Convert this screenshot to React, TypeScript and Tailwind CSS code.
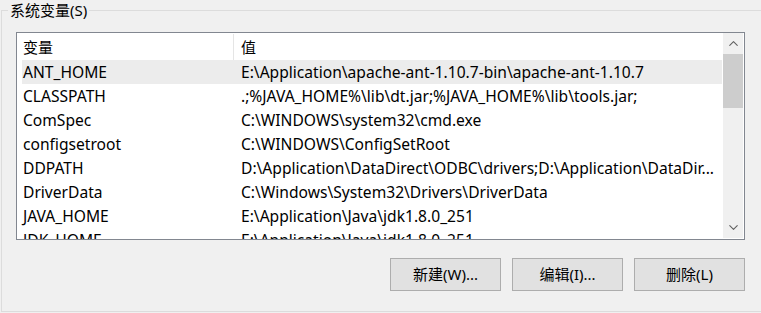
import { ChevronUp, ChevronDown } from 'lucide-react';

const rows = [
  { name: 'ANT_HOME', value: 'E:\\Application\\apache-ant-1.10.7-bin\\apache-ant-1.10.7', selected: true },
  { name: 'CLASSPATH', value: '.;%JAVA_HOME%\\lib\\dt.jar;%JAVA_HOME%\\lib\\tools.jar;' },
  { name: 'ComSpec', value: 'C:\\WINDOWS\\system32\\cmd.exe' },
  { name: 'configsetroot', value: 'C:\\WINDOWS\\ConfigSetRoot' },
  { name: 'DDPATH', value: 'D:\\Application\\DataDirect\\ODBC\\drivers;D:\\Application\\DataDir...' },
  { name: 'DriverData', value: 'C:\\Windows\\System32\\Drivers\\DriverData' },
  { name: 'JAVA_HOME', value: 'E:\\Application\\Java\\jdk1.8.0_251' },
  { name: 'JDK_HOME', value: 'E:\\Application\\Java\\jdk1.8.0_251' },
];

const font = "font-['Noto_Sans','Noto_Sans_CJK_SC',sans-serif]";

export default function App() {
  return (
    <div className={`w-[761px] h-[313px] bg-[#f0f0f0] overflow-hidden text-[15px] text-black ${font}`}>
      {/* group box */}
      <div className="relative mt-[10px] ml-[1px] w-[790px] h-[302px] border border-[#dcdcdc] pt-[21px] pl-[14px]">
        <div className="absolute -top-[11px] left-[6px] px-[2px] bg-[#f0f0f0] leading-[20px] text-[15px]">系统变量(S)</div>

        {/* list */}
        <div className="w-[729px] h-[208px] border border-[#828790] bg-white flex">
          <div className="flex-1 overflow-hidden">
            <div className="h-[27px] flex items-center pt-[1px]">
              <div className="w-[217px] pl-[6px] h-full flex items-center border-r border-[#e5e5e5]">变量</div>
              <div className="pl-[7px]">值</div>
            </div>
            {rows.map(r => (
              <div key={r.name} className={`h-[24px] ml-[5px] mr-[1px] pt-[2px] flex items-center whitespace-nowrap text-[15.6px] ${r.selected ? 'bg-[#ececec]' : ''}`}>
                <div className="w-[219px] pl-[1px] shrink-0">{r.name}</div>
                <div className="overflow-hidden">{r.value}</div>
              </div>
            ))}
          </div>
          {/* scrollbar */}
          <div className="w-[20px] mr-[1px] mb-[1px] bg-[#f0f0f0] flex flex-col">
            <div className="h-[21px] flex items-center justify-center text-[#606060]">
              <ChevronUp size={15} strokeWidth={1.75} />
            </div>
            <div className="h-[54px] bg-[#cdcdcd]" />
            <div className="flex-1" />
            <div className="h-[21px] flex items-center justify-center text-[#606060]">
              <ChevronDown size={15} strokeWidth={1.75} />
            </div>
          </div>
        </div>

        {/* buttons */}
        <div className="flex gap-[11px] mt-[18px] ml-[374px]">
          <WinButton label="新建(W)..." />
          <WinButton label="编辑(I)..." />
          <WinButton label="删除(L)" />
        </div>
      </div>
    </div>
  );
}

function WinButton({ label }: { label: string }) {
  return (
    <button className="w-[111px] h-[33px] bg-[#e1e1e1] border border-[#adadad] flex items-center justify-center text-[15px]">
      {label}
    </button>
  );
}
